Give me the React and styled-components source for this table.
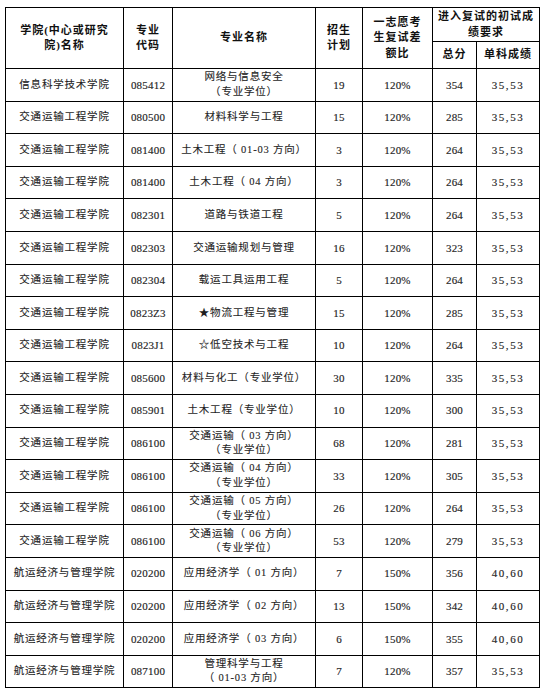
import React from "react";
import styled, { createGlobalStyle } from "styled-components";

const GlobalStyle = createGlobalStyle`
  html, body {
    margin: 0;
    padding: 0;
    background: #ffffff;
  }
`;

const rows = [
  ["信息科学技术学院", "085412", ["网络与信息安全", "（专业学位）"], "19", "120%", "354", "35,53"],
  ["交通运输工程学院", "080500", ["材料科学与工程"], "15", "120%", "285", "35,53"],
  ["交通运输工程学院", "081400", ["土木工程（ 01-03 方向）"], "3", "120%", "264", "35,53"],
  ["交通运输工程学院", "081400", ["土木工程（ 04 方向）"], "3", "120%", "264", "35,53"],
  ["交通运输工程学院", "082301", ["道路与铁道工程"], "5", "120%", "264", "35,53"],
  ["交通运输工程学院", "082303", ["交通运输规划与管理"], "16", "120%", "323", "35,53"],
  ["交通运输工程学院", "082304", ["载运工具运用工程"], "5", "120%", "264", "35,53"],
  ["交通运输工程学院", "0823Z3", ["★物流工程与管理"], "15", "120%", "285", "35,53"],
  ["交通运输工程学院", "0823J1", ["☆低空技术与工程"], "10", "120%", "264", "35,53"],
  ["交通运输工程学院", "085600", ["材料与化工（专业学位）"], "30", "120%", "335", "35,53"],
  ["交通运输工程学院", "085901", ["土木工程（专业学位）"], "10", "120%", "300", "35,53"],
  ["交通运输工程学院", "086100", ["交通运输（ 03 方向）", "（专业学位）"], "68", "120%", "281", "35,53"],
  ["交通运输工程学院", "086100", ["交通运输（ 04 方向）", "（专业学位）"], "33", "120%", "305", "35,53"],
  ["交通运输工程学院", "086100", ["交通运输（ 05 方向）", "（专业学位）"], "26", "120%", "264", "35,53"],
  ["交通运输工程学院", "086100", ["交通运输（ 06 方向）", "（专业学位）"], "53", "120%", "279", "35,53"],
  ["航运经济与管理学院", "020200", ["应用经济学（ 01 方向）"], "7", "150%", "356", "40,60"],
  ["航运经济与管理学院", "020200", ["应用经济学（ 02 方向）"], "13", "150%", "342", "40,60"],
  ["航运经济与管理学院", "020200", ["应用经济学（ 03 方向）"], "6", "150%", "355", "40,60"],
  ["航运经济与管理学院", "087100", ["管理科学与工程", "（ 01-03 方向）"], "7", "120%", "357", "35,53"],
];

const colWidths = [118, 49, 143, 47, 70, 44, 63];

export default function App() {
  return (
    <>
      <GlobalStyle />
      <Page>
        <Sheet>
          <colgroup>
            {colWidths.map((w, i) => (
              <col key={i} style={{ width: w }} />
            ))}
          </colgroup>
          <thead>
            <tr>
              <HeadCell rowSpan={2}>
                学院(中心或研究
                <br />
                院)名称
              </HeadCell>
              <HeadCell rowSpan={2}>
                专业
                <br />
                代码
              </HeadCell>
              <HeadCell rowSpan={2}>专业名称</HeadCell>
              <HeadCell rowSpan={2}>
                招生
                <br />
                计划
              </HeadCell>
              <HeadCell rowSpan={2}>
                一志愿考
                <br />
                生复试差
                <br />
                额比
              </HeadCell>
              <HeadCell colSpan={2} $height={33}>
                进入复试的初试成
                <br />
                绩要求
              </HeadCell>
            </tr>
            <tr>
              <HeadCell $height={26}>总分</HeadCell>
              <HeadCell $height={26}>单科成绩</HeadCell>
            </tr>
          </thead>
          <tbody>
            {rows.map((r, i) => (
              <Row key={i}>
                <Cell>{r[0]}</Cell>
                <Cell $num>{r[1]}</Cell>
                <Cell>
                  {r[2].map((line, j) => (
                    <Line key={j}>{line}</Line>
                  ))}
                </Cell>
                <Cell $num>{r[3]}</Cell>
                <Cell $num>{r[4]}</Cell>
                <Cell $num>{r[5]}</Cell>
                <Cell $num $wide>{r[6]}</Cell>
              </Row>
            ))}
          </tbody>
        </Sheet>
      </Page>
    </>
  );
}

const Page = styled.div`
  padding: 7px 0 0 5px;
`;

const Sheet = styled.table`
  border-collapse: collapse;
  table-layout: fixed;
  width: 535px;
  font-family: "Liberation Serif", "Noto Sans CJK SC", serif;
  color: #1e1e1e;
`;

const HeadCell = styled.th`
  border: 1px solid #000;
  padding: 0;
  height: ${(p) => (p.$height ? p.$height + "px" : "auto")};
  font-size: 11px;
  font-weight: 700;
  line-height: 15.5px;
  letter-spacing: 1px;
  text-align: center;
  vertical-align: middle;
  color: #111;
`;

const Row = styled.tr`
  height: 32.6px;
`;

const Cell = styled.td`
  border: 1px solid #000;
  padding: 0;
  font-size: ${(p) => (p.$num ? "11px" : "10.5px")};
  letter-spacing: ${(p) => (p.$wide ? "1.6px" : p.$num ? "0.2px" : "0.8px")};
  line-height: 14.5px;
  text-align: center;
  vertical-align: middle;
  white-space: nowrap;
  -webkit-text-stroke: ${(p) => (p.$num ? "0.15px" : "0.1px")} #1e1e1e;
`;

const Line = styled.div`
  display: block;
`;
